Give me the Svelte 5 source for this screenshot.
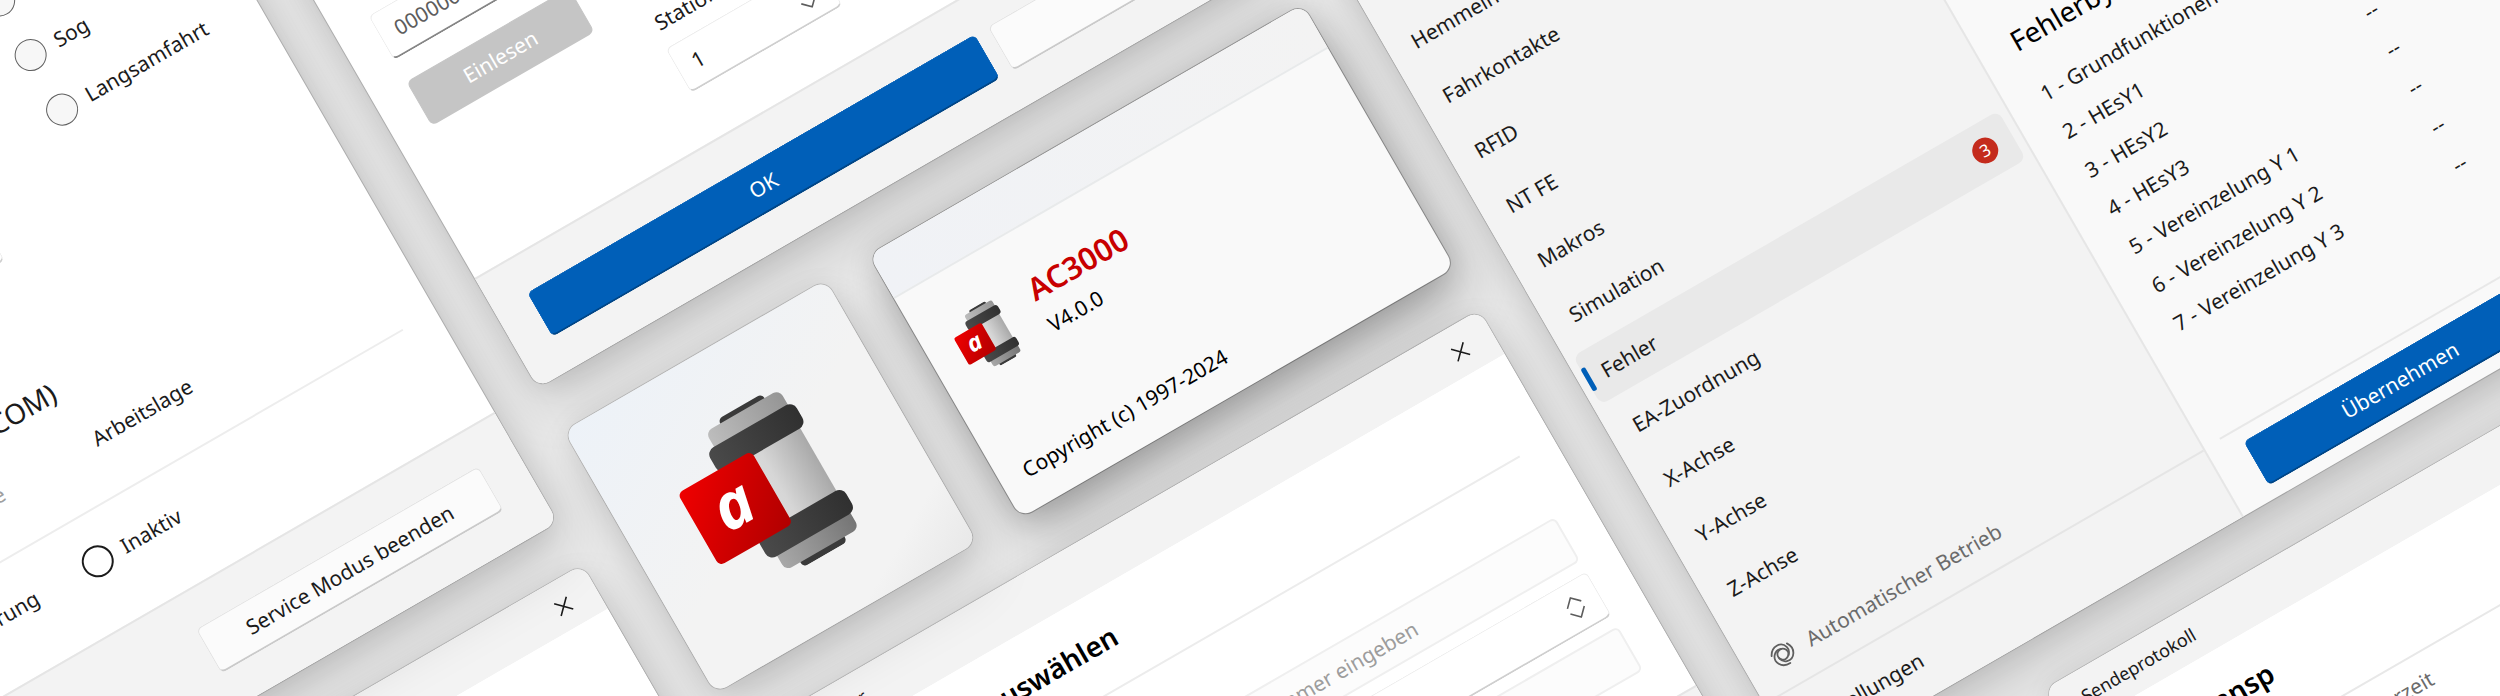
<script>
  const navItems = [
    'Hemmeinheit', 'Fahrkontakte', 'RFID', 'NT FE', 'Makros', 'Simulation',
    'Fehler', 'EA-Zuordnung', 'X-Achse', 'Y-Achse', 'Z-Achse'
  ];
  const errorRows = [
    '1 - Grundfunktionen', '2 - HEsY1', '3 - HEsY2', '4 - HEsY3',
    '5 - Vereinzelung Y 1', '6 - Vereinzelung Y 2', '7 - Vereinzelung Y 3'
  ];
  const speeds = ['Druck', 'Sog', 'Langsamfahrt'];
  const swirl = 'M-11.300 2C-12-8-2-13 4-7C6-5 6.500-2 5.500 1';
</script>

{#snippet logo(id)}
  <svg class="logo" viewBox="0 0 172 172" aria-hidden="true">
    <defs>
      <linearGradient id="{id}-body" x1="0" x2="1" y1="0" y2="0">
        <stop offset="0" stop-color="#e2e2e2" /><stop offset="0.45" stop-color="#d6d6d6" /><stop offset="1" stop-color="#a9a9a9" />
      </linearGradient>
      <linearGradient id="{id}-ring" x1="0" x2="1" y1="0" y2="0">
        <stop offset="0" stop-color="#4a4a4a" /><stop offset="1" stop-color="#303030" />
      </linearGradient>
      <linearGradient id="{id}-top" x1="0" x2="1" y1="0" y2="0">
        <stop offset="0" stop-color="#bdbdbd" /><stop offset="1" stop-color="#959595" />
      </linearGradient>
      <linearGradient id="{id}-low" x1="0" x2="1" y1="0" y2="0">
        <stop offset="0" stop-color="#a8a8a8" /><stop offset="1" stop-color="#757575" />
      </linearGradient>
      <linearGradient id="{id}-red" x1="0" x2="1" y1="0" y2="1">
        <stop offset="0" stop-color="#f00000" /><stop offset="1" stop-color="#b00000" />
      </linearGradient>
    </defs>
    <rect x="74" y="1" width="51" height="14" rx="5" fill="#3a3a3a" />
    <rect x="74" y="158" width="51" height="14" rx="5" fill="#3a3a3a" />
    <rect x="57" y="6" width="85" height="30" rx="7" fill="url(#{id}-top)" />
    <rect x="57" y="136" width="85" height="30" rx="7" fill="url(#{id}-low)" />
    <rect x="56" y="45" width="85" height="82" fill="url(#{id}-body)" />
    <rect x="48" y="23" width="100" height="27" rx="8" fill="url(#{id}-ring)" />
    <rect x="48" y="122" width="100" height="27" rx="8" fill="url(#{id}-ring)" />
    <rect x="2" y="45" width="85" height="84" rx="6" fill="url(#{id}-red)" />
    <text x="44" y="105" text-anchor="middle" class="mark">a</text>
  </svg>
{/snippet}

{#snippet closeIcon()}
  <svg class="close-icon" viewBox="0 0 16 16" aria-hidden="true"><path d="M1 1 15 15M15 1 1 15" /></svg>
{/snippet}

<main class="stage">
  <div class="board">
    <section class="window serial">
      <div class="serial-body">
        <div class="serial-read">
          <input class="field underlined" aria-label="Seriennummer" value="00000000" />
          <button class="btn disabled" type="button">Einlesen</button>
        </div>
        <div class="station">
          <label for="station">Station</label>
          <div class="select-wrap">
            <select id="station" class="field"><option>1</option></select>
            <svg class="chevron" viewBox="0 0 18 10" aria-hidden="true"><path d="M1 1 9 9 17 1" /></svg>
          </div>
        </div>
      </div>
      <footer class="bar">
        <button class="btn primary ok" type="button">OK</button>
        <button class="btn grow" type="button" aria-label="Abbrechen"></button>
      </footer>
    </section>

    <section class="window about">
      <header class="titlebar lined"></header>
      <div class="about-body">
        <div class="about-head">
          {@render logo('small')}
          <div class="about-names">
            <h1>AC3000</h1>
            <p>V4.0.0</p>
          </div>
        </div>
        <p>Copyright (c) 1997-2024</p>
      </div>
    </section>

    <section class="window manager">
      <nav class="sidebar">
        <ul>
          {#each navItems as item}
            <li>
              <a href="#{item}" class:active={item === 'Fehler'}>
                <span>{item}</span>
                {#if item === 'Fehler'}<span class="badge">3</span>{/if}
              </a>
            </li>
          {/each}
        </ul>
        <p class="mode">
          <svg class="mode-icon" viewBox="-13 -13 26 26" aria-hidden="true">
            <circle r="5.500" />
            <g transform="rotate(30)">
              <path d={swirl} />
              <path d={swirl} transform="rotate(120)" />
              <path d={swirl} transform="rotate(240)" />
            </g>
          </svg>
          Automatischer Betrieb
        </p>
        <a class="settings" href="#einstellungen">Einstellungen</a>
      </nav>
      <div class="details">
        <h2>Fehlerbytes</h2>
        <table>
          <tbody>
            {#each errorRows as row}
              <tr><th scope="row">{row}</th><td>--</td></tr>
            {/each}
          </tbody>
        </table>
        <div class="apply">
          <button class="btn primary" type="button">Übernehmen</button>
        </div>
      </div>
    </section>

    <section class="window chooser">
      <header class="titlebar">
        <span class="chooser-name">Ordner</span>
        <button class="close" type="button" aria-label="Schließen">{@render closeIcon()}</button>
      </header>
      <div class="pane chooser-body">
        <h2>auswählen</h2>
        <div class="fields">
          <input class="field quiet" aria-label="Nummer" placeholder="Nummer eingeben" />
          <div class="select-wrap">
            <input class="field" aria-label="Anzahl" />
            <svg class="spinner" viewBox="0 0 18 24" aria-hidden="true"><path d="M1 9 9 1 17 9M1 15 9 23 17 15" /></svg>
          </div>
          <input class="field quiet" aria-label="Bemerkung" />
        </div>
      </div>
      <footer class="bar"></footer>
    </section>

    <section class="window protocol">
      <header class="titlebar"><span class="protocol-name">Sendeprotokoll</span></header>
      <div class="pane protocol-body">
        <h2>Transp</h2>
        <p>Uhrzeit</p>
      </div>
    </section>

    <section class="window blank">
      <header class="titlebar">
        <button class="close" type="button" aria-label="Schließen">{@render closeIcon()}</button>
      </header>
      <div class="pane"></div>
    </section>

    <section class="window service">
      <div class="service-body">
        <div class="service-top">
          <input class="field" aria-label="Wert" />
          <div class="radios">
            {#each speeds as speed}
              <label class="radio"><input type="radio" name="speed" />{speed}</label>
            {/each}
          </div>
        </div>
        <h2>(COM)</h2>
        <div class="positions">
          <span class="muted">Grundlage</span>
          <span>Arbeitslage</span>
        </div>
        <div class="control-row">
          <span>Steuerung</span>
          <label class="radio strong"><input type="radio" name="control" />Inaktiv</label>
        </div>
      </div>
      <footer class="bar end">
        <button class="btn leave" type="button">Service Modus beenden</button>
      </footer>
    </section>

    <section class="window tile">{@render logo('large')}</section>
  </div>
</main>

<style>
  :global(body) { margin: 0; background: #ebebeb; }
  .stage {
    position: relative;
    min-height: 100vh;
    overflow: hidden;
    background: #ebebeb;
    color: #1b1b1b;
    font: 21px/28px "Noto Sans", sans-serif;
  }
  .board { position: absolute; top: 0; left: 0; transform: rotate(-30deg); transform-origin: 0 0; }
  .board * { box-sizing: border-box; }
  h1, h2, p, ul { margin: 0; padding: 0; }
  h2 { font-size: 28px; line-height: 38px; font-weight: 400; }
  a { color: inherit; text-decoration: none; }

  .window {
    position: absolute;
    display: flex;
    flex-direction: column;
    overflow: hidden;
    border-radius: 13px;
    background: #fff;
    box-shadow: 0 0 0 1px rgba(0, 0, 0, 0.16), 0 3px 26px rgba(0, 0, 0, 0.1), 0 28px 56px rgba(0, 0, 0, 0.14);
  }
  .titlebar { flex: none; display: flex; align-items: center; height: 51px; background: #f3f3f3; font-size: 18px; }
  .close { display: grid; place-items: center; width: 74px; height: 51px; margin-left: auto; padding: 3px 0 0; border: 0; background: none; }
  .close-icon { width: 16px; height: 16px; fill: none; stroke: #1b1b1b; stroke-width: 1.6; }
  .pane { flex: 1; background: #fff; }
  .bar { display: flex; gap: 15px; padding: 37px 38px; border-top: 2px solid #e5e5e5; background: #f3f3f3; }
  .bar.end { justify-content: flex-end; padding-right: 41px; }

  .btn {
    height: 51px;
    border: 1px solid #e2e2e2;
    border-bottom: 2px solid #cacaca;
    border-radius: 6px;
    background: #fbfbfb;
    color: inherit;
    font: inherit;
  }
  .btn.primary { border-color: #005fb8 #005fb8 #004687; background: #005fb8; color: #fff; }
  .btn.disabled { border-color: #c5c5c5; background: #c5c5c5; color: #fff; }
  .btn.grow { flex: 1; }
  .field {
    display: block;
    width: 100%;
    height: 51px;
    padding: 0 16px;
    border: 1px solid #ececec;
    border-bottom: 2px solid #cfcfcf;
    border-radius: 6px;
    background: #fff;
    color: inherit;
    font: inherit;
    appearance: none;
  }
  .field.underlined { border-bottom-color: #868686; color: #5d5d5d; }
  .field.quiet { border: 2px solid #efefef; background: #fcfcfc; }
  .field::placeholder { color: #9d9d9d; opacity: 1; }
  .select-wrap { display: grid; align-items: center; }
  .select-wrap > * { grid-area: 1 / 1; }
  .chevron, .spinner { justify-self: end; width: 18px; fill: none; stroke: #5d5d5d; stroke-width: 1.6; margin-right: 18px; }
  .chevron { height: 10px; margin-top: 14px; }
  .spinner { height: 24px; }

  .radio { display: flex; align-items: center; gap: 12px; }
  .radio input { appearance: none; width: 32px; height: 32px; margin: 0; border: 1px solid #5f5f5f; border-radius: 50%; background: #f7f7f7; }
  .radio.strong input { border: 2px solid #1b1b1b; background: #fff; }

  .service { left: -440px; top: -40px; width: 662px; height: 771px; }
  .service-body { flex: 1; padding: 24px 38px 0; }
  .service-top { display: flex; align-items: flex-end; gap: 109px; height: 244px; }
  .service-top .field { width: 276px; }
  .radios { display: grid; gap: 31px; align-self: flex-start; }
  .service h2 { width: 253px; margin-top: 118px; text-align: right; }
  .positions { display: flex; gap: 104px; padding: 30px 0 44px; border-bottom: 2px solid #ededed; }
  .positions .muted { width: 159px; text-align: right; color: #a0a0a0; }
  .control-row { display: flex; align-items: center; gap: 54px; margin-top: 31px; }
  .control-row > span { width: 136px; text-align: right; }
  .leave { width: 326px; }

  .serial { left: 272px; top: 80px; width: 854px; height: 525px; }
  .serial-body { flex: 1; display: flex; gap: 53px; padding: 118px 39px 0; }
  .serial-read { display: grid; gap: 25px; align-content: start; width: 188px; }
  .station { width: 175px; margin-top: 137px; }
  .station label { display: block; margin: 0 0 12px 4px; }
  .ok { width: 517px; }

  .tile { left: 273px; top: 655px; width: 302px; height: 303px; align-items: center; justify-content: center; background: linear-gradient(150deg, #edf2f8, #f3f3f3 50%, #f3f3f3 84%, #e8e8e8); }
  .logo { display: block; flex: none; width: 172px; height: 172px; }
  .mark { font: italic 700 64px "Noto Sans", sans-serif; fill: #fff; }

  .about { left: 625px; top: 655px; width: 501px; height: 304px; background: #f9f9f9; color: #000; box-shadow: 0 0 0 1px rgba(0, 0, 0, 0.28), 0 3px 30px rgba(0, 0, 0, 0.16), 0 28px 56px rgba(0, 0, 0, 0.26); }
  .titlebar.lined { border-bottom: 2px solid #e8eaeb; background: linear-gradient(90deg, #f0f2f6, #f3f3f3); }
  .about-body { flex: 1; display: flex; flex-direction: column; justify-content: space-between; padding: 41px 26px 25px; }
  .about-head { display: flex; align-items: flex-start; gap: 26px; padding-left: 5px; }
  .about-head .logo { width: 64px; height: 64px; margin-top: 6px; }
  .about-names { display: grid; gap: 6px; }
  h1 { color: #c80000; font-size: 31px; line-height: 40px; font-weight: 600; }

  .manager { left: 1176px; top: 600px; width: 1124px; height: 969px; flex-direction: row; background: #f9f9f9; }
  .sidebar { display: flex; flex-direction: column; width: 509px; padding-top: 115px; border-right: 2px solid #e6e6e6; background: #f3f3f3; }
  .sidebar ul { flex: 1; display: flex; flex-direction: column; justify-content: space-between; padding: 0 8px; list-style: none; }
  .sidebar li a { display: flex; align-items: center; justify-content: space-between; position: relative; height: 56px; padding: 0 18px; border-radius: 8px; }
  .sidebar .active { background: #e9e9e9; }
  .active::before { content: ""; position: absolute; left: 0; top: 15px; width: 5px; height: 26px; border-radius: 3px; background: #005fb8; }
  .badge { width: 26px; height: 26px; border-radius: 50%; background: #c42b1c; color: #fff; font-size: 17px; line-height: 26px; text-align: center; }
  .mode { display: flex; align-items: center; gap: 15px; height: 89px; padding: 20px 28px 0; border-bottom: 2px solid #e5e5e5; color: #6b6b6b; }
  .mode-icon { width: 26px; height: 26px; fill: none; stroke: #5f5f5f; stroke-width: 1.8; stroke-linecap: round; }
  .settings { display: flex; align-items: center; height: 76px; padding-left: 25px; }
  .details { flex: 1; display: flex; flex-direction: column; padding-top: 424px; }
  .details h2 { margin-left: 36px; color: #000; }
  .details table { width: 334px; height: 310px; margin: 19px 0 0 36px; border-collapse: collapse; }
  .details th, .details td { padding: 0; font-weight: 400; text-align: left; }
  .details td { padding-top: 4px; text-align: right; }
  .apply { margin: auto 0 0 18px; padding: 13px 0 14px 19px; border-top: 2px solid #e8e8e8; }
  .apply .btn { display: block; width: 333px; }

  .chooser { left: 272px; top: 1008px; width: 854px; height: 592px; }
  .chooser-name { width: 130px; text-align: right; }
  .chooser-body { flex: none; padding: 28px 38px 39px; }
  .chooser-body h2 { width: 339px; text-align: right; font-weight: 600; color: #000; }
  .fields { display: flex; flex-direction: column; gap: 12px; margin-top: 29px; padding: 69px 0 0 398px; border-top: 2px solid #ececec; }
  .chooser .bar { flex: 1; }

  .protocol { left: 1426px; top: 1619px; width: 900px; height: 400px; }
  .protocol-name { padding-left: 29px; }
  .protocol-body { padding: 27px 38px; }
  .protocol-body h2 { width: 168px; padding-bottom: 38px; box-sizing: content-box; text-align: right; font-weight: 600; color: #000; }
  .protocol-body p { padding: 13px 0 0; border-top: 2px solid #e8e8e8; text-indent: 232px; color: #6b6b6b; }

  .blank { left: -200px; top: 780px; width: 422px; height: 500px; }
</style>
